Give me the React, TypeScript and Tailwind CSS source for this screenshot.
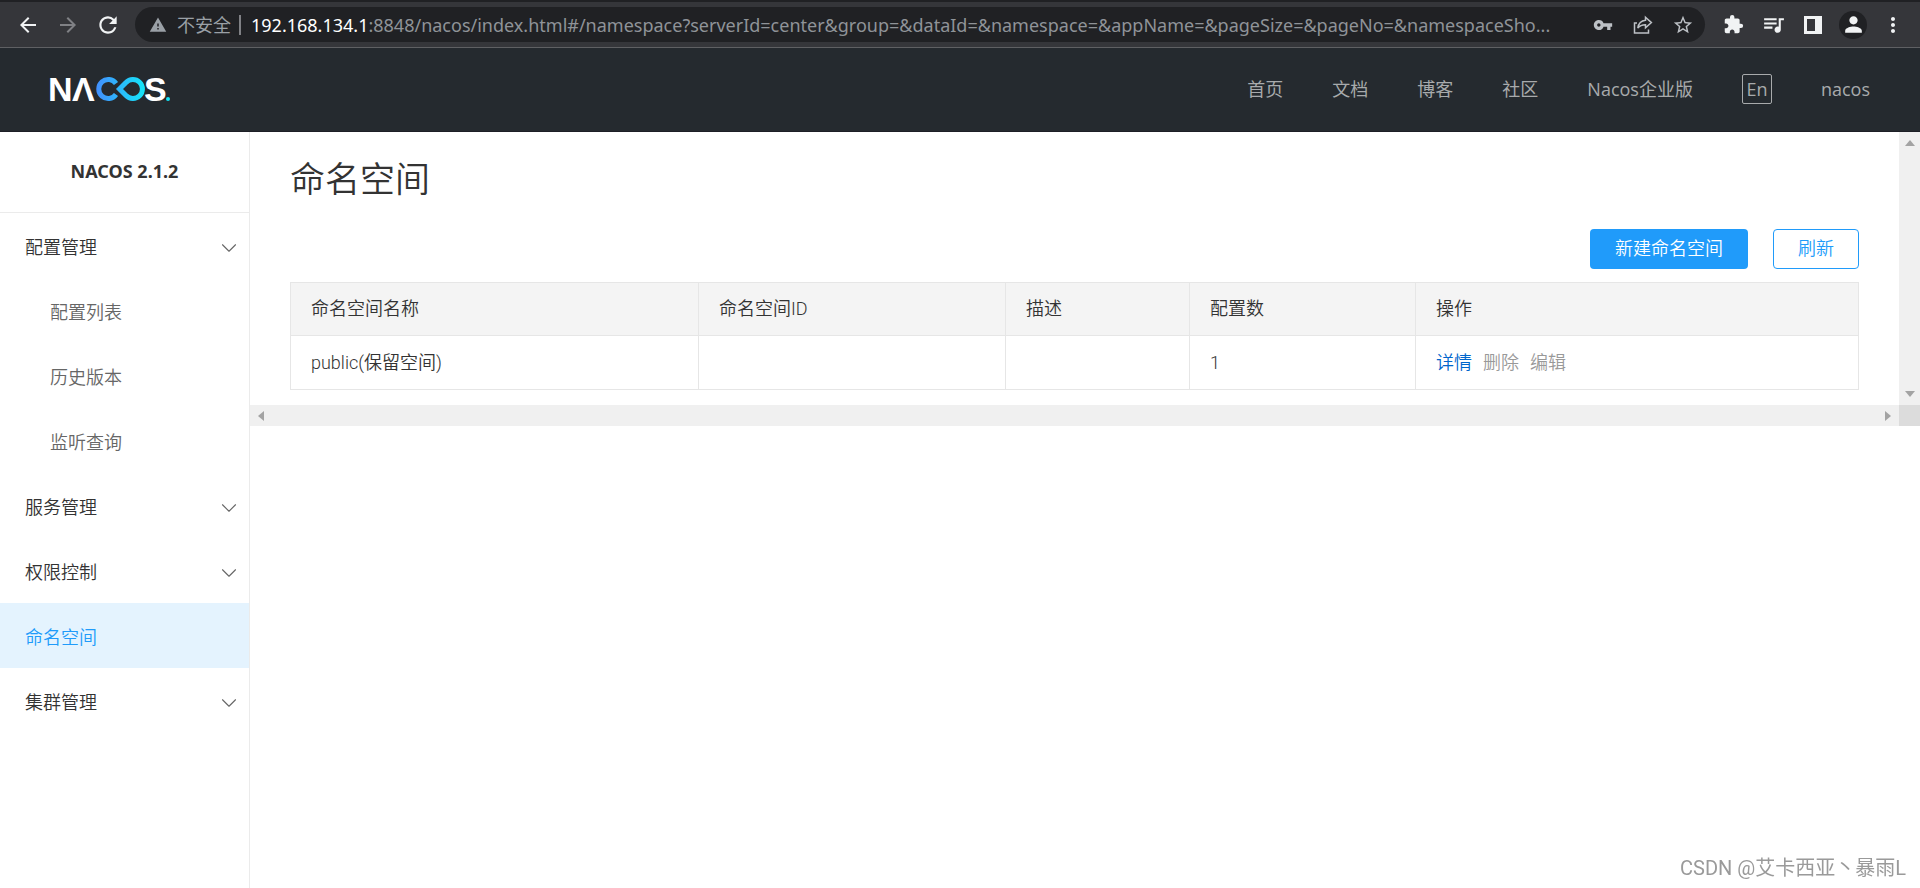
import React, { useState } from 'react';
import { ChevronDown } from 'lucide-react';
import {
  MdArrowBack,
  MdArrowForward,
  MdExtension,
  MdMoreVert,
  MdPerson,
  MdQueueMusic,
  MdRefresh,
  MdStarBorder,
  MdVpnKey,
  MdWarning,
} from 'react-icons/md';

interface MenuItem {
  key: string;
  label: string;
  children?: MenuItem[];
}

interface Namespace {
  id: string;
  name: string;
  description: string;
  configCount: number;
}

const MENU: MenuItem[] = [
  {
    key: 'config',
    label: '配置管理',
    children: [
      { key: 'configList', label: '配置列表' },
      { key: 'history', label: '历史版本' },
      { key: 'listening', label: '监听查询' },
    ],
  },
  { key: 'service', label: '服务管理', children: [{ key: 'serviceList', label: '服务列表' }] },
  { key: 'authority', label: '权限控制', children: [{ key: 'users', label: '用户列表' }] },
  { key: 'namespace', label: '命名空间' },
  { key: 'cluster', label: '集群管理', children: [{ key: 'nodes', label: '节点列表' }] },
];

const NAV_LINKS = ['首页', '文档', '博客', '社区', 'Nacos企业版'];

const NAMESPACES: Namespace[] = [
  { id: '', name: 'public(保留空间)', description: '', configCount: 1 },
];

const ShareIcon = () => (
  <svg width="20" height="20" viewBox="0 0 20 20" fill="none" stroke="currentColor" strokeWidth="1.5" strokeLinejoin="miter">
    <path d="M4 8H1.5v10h14v-3.5" />
    <path d="M12.5 2.2 18.4 7.6l-5.9 5.2V9.7c-3.5 0-5.9 1-7.7 3.4.6-4 3-7.3 7.7-7.8z" />
  </svg>
);

const SidePanelIcon = () => (
  <svg width="20" height="20" viewBox="0 0 20 20" fill="currentColor" fillRule="evenodd">
    <path d="M1 1h18v18H1zM4 4v12h8V4z" />
  </svg>
);

const Logo = () => (
  <svg width="130" height="48" viewBox="0 0 130 48" role="img" aria-label="NACOS.">
    <defs>
      <linearGradient id="loop" gradientUnits="userSpaceOnUse" x1="49" y1="0" x2="99" y2="0">
        <stop offset="0" stopColor="#448dfe" />
        <stop offset="1" stopColor="#14e5f8" />
      </linearGradient>
    </defs>
    <g fill="#fff" fontFamily="Liberation Sans, sans-serif" fontWeight="700" fontSize="34">
      <text x="2" y="36">N</text>
      <text x="26" y="36">Λ</text>
      <text x="98" y="36">S</text>
    </g>
    <g fill="none" stroke="url(#loop)" strokeWidth="5">
      <path d="M70 18.500A9.500 9.500 0 1 0 70 29.500" />
      <path d="M73.500 24 80 17.500A9.500 9.500 0 1 1 80 30.500Z" />
    </g>
    <circle cx="122" cy="34" r="2" fill="#14e5f8" />
  </svg>
);

// Barra do navegador
const BrowserBar = () => (
  <div className="flex h-12 items-center border-t-2 border-b border-t-[#202124] border-b-[#5f6063] bg-[#35363a] pr-[7px] pl-2 font-['Noto_Sans','Noto_Sans_CJK_SC',sans-serif] text-lg text-[#f1f3f4]">
    <button type="button" aria-label="后退" className="flex w-10 justify-center"><MdArrowBack size={24} /></button>
    <button type="button" aria-label="前进" className="flex w-10 justify-center text-[#808185]"><MdArrowForward size={24} /></button>
    <button type="button" aria-label="刷新页面" className="flex w-10 justify-center"><MdRefresh size={26} /></button>

    <div className="ml-[7px] flex h-[35px] min-w-0 flex-1 items-center rounded-full bg-[#202124] pr-0.5 pl-3.5 text-[#9aa0a6]">
      <MdWarning size={18} className="shrink-0" />
      <span className="ml-2.5 shrink-0">不安全</span>
      <span className="mr-2.5 ml-2 h-5 w-0.5 shrink-0 bg-[#808185]" />
      <span className="min-w-0 flex-1 truncate text-[#8f9398]">
        <span className="text-white">192.168.134.1</span>
        :8848/nacos/index.html#/namespace?serverId=center&amp;group=&amp;dataId=&amp;namespace=&amp;appName=&amp;pageSize=&amp;pageNo=&amp;namespaceSho...
      </span>
      <div className="flex shrink-0 text-[#bdc1c6]">
        <button type="button" aria-label="密码" className="flex w-10 items-center justify-center"><MdVpnKey size={20} /></button>
        <button type="button" aria-label="分享" className="flex w-10 items-center justify-center"><ShareIcon /></button>
        <button type="button" aria-label="收藏" className="flex w-10 items-center justify-center"><MdStarBorder size={22} /></button>
      </div>
    </div>

    <div className="ml-2 flex items-center">
      <button type="button" aria-label="扩展程序" className="flex w-10 justify-center"><MdExtension size={21} /></button>
      <button type="button" aria-label="媒体" className="flex w-10 justify-center"><MdQueueMusic size={25} /></button>
      <button type="button" aria-label="侧边栏" className="flex w-10 justify-center"><SidePanelIcon /></button>
      <button type="button" aria-label="用户" className="flex w-10 justify-center">
        <span className="flex size-7 items-center justify-center rounded-full bg-[#202124]"><MdPerson size={25} /></span>
      </button>
      <button type="button" aria-label="更多" className="flex w-10 justify-center"><MdMoreVert size={24} /></button>
    </div>
  </div>
);

// Cabeçalho do Nacos
const Header = () => (
  <header className="flex h-21 items-center justify-between border-b border-[#1d1f26] bg-[#252a2f] pr-[50px] pb-0.5 pl-[46px]">
    <a href="#/" className="block"><Logo /></a>
    <nav className="flex items-center gap-[49px] font-['Open_Sans','Noto_Sans_CJK_SC',sans-serif] text-lg text-[#a8aaac]">
      {NAV_LINKS.map(link => (
        <a key={link} href="#/">{link}</a>
      ))}
      <button type="button" className="flex size-[30px] items-center justify-center rounded-xs border border-[#a8aaac]">En</button>
      <a href="#/">nacos</a>
    </nav>
  </header>
);

const Sidebar = () => {
  const [openKeys, setOpenKeys] = useState<string[]>(['config']);
  const [current, setCurrent] = useState('namespace');

  // Abre ou fecha um grupo do menu
  const toggle = (key: string) => {
    setOpenKeys(prev => (prev.includes(key) ? prev.filter(k => k !== key) : [...prev, key]));
  };

  return (
    <aside className="w-[250px] shrink-0 border-r border-[#ebebeb]">
      <h2 className="flex h-[81px] items-center justify-center border-b border-[#ebebeb] pb-0.5 font-['Noto_Sans',sans-serif] text-lg font-bold text-[#333]">
        NACOS 2.1.2
      </h2>
      <ul>
        {MENU.map(item => (
          <li key={item.key}>
            <button
              type="button"
              onClick={() => (item.children ? toggle(item.key) : setCurrent(item.key))}
              className={`flex h-[65px] w-full items-center justify-between pt-1 pr-[7px] pl-[25px] ${
                current === item.key ? 'bg-[#e4f3fe] text-[#209bfa]' : 'text-[#333]'
              }`}
            >
              {item.label}
              {item.children && <ChevronDown size={26} strokeWidth={1} className="text-[#666]" />}
            </button>
            {item.children && openKeys.includes(item.key) && (
              <ul>
                {item.children.map(child => (
                  <li key={child.key}>
                    <button
                      type="button"
                      onClick={() => setCurrent(child.key)}
                      className={`flex h-[65px] w-full items-center pt-1 pl-[50px] ${
                        current === child.key ? 'bg-[#e4f3fe] text-[#209bfa]' : 'text-[#666]'
                      }`}
                    >
                      {child.label}
                    </button>
                  </li>
                ))}
              </ul>
            )}
          </li>
        ))}
      </ul>
    </aside>
  );
};

const NamespaceTable = ({ rows }: { rows: Namespace[] }) => (
  <table className="mt-[13px] w-full table-fixed border-collapse text-left text-[#333]">
    <thead>
      <tr className="h-[53px] bg-[#f4f4f4]">
        <th className="w-[408px] border border-[#e6e6e6] px-5 font-[350]">命名空间名称</th>
        <th className="w-[307px] border border-[#e6e6e6] px-5 font-[350]">命名空间ID</th>
        <th className="w-[184px] border border-[#e6e6e6] px-5 font-[350]">描述</th>
        <th className="w-[226px] border border-[#e6e6e6] px-5 font-[350]">配置数</th>
        <th className="border border-[#e6e6e6] px-5 font-[350]">操作</th>
      </tr>
    </thead>
    <tbody>
      {rows.map(row => (
        <tr key={row.name} className="h-[54px]">
          <td className="border border-[#e6e6e6] px-5">{row.name}</td>
          <td className="border border-[#e6e6e6] px-5">{row.id}</td>
          <td className="border border-[#e6e6e6] px-5">{row.description}</td>
          <td className="border border-[#e6e6e6] px-5">{row.configCount}</td>
          <td className="border border-[#e6e6e6] px-5">
            <div className="flex gap-[11px] text-[#999]">
              <a href="#/" className="text-[#06c]">详情</a>
              <button type="button">删除</button>
              <button type="button">编辑</button>
            </div>
          </td>
        </tr>
      ))}
    </tbody>
  </table>
);

const App: React.FC = () => (
  <div className="flex min-h-screen flex-col bg-white font-[Roboto,'Noto_Sans_CJK_SC',sans-serif] text-lg">
    <BrowserBar />
    <Header />
    <div className="flex flex-1 font-[350]">
      <Sidebar />
      <div className="flex min-w-0 flex-1 flex-col">
        <div className="flex">
          <main className="min-w-0 flex-1 px-10 pt-[26px] pb-[15px]">
            <h1 className="text-[35px] leading-[45px] text-[#333]">命名空间</h1>
            <div className="mt-[26px] flex justify-end gap-[25px]">
              <button type="button" className="h-10 rounded-sm bg-[#209bfa] px-[25px] text-white">新建命名空间</button>
              <button type="button" className="h-10 rounded-sm border border-[#209bfa] px-6 text-[#209bfa]">刷新</button>
            </div>
            <NamespaceTable rows={NAMESPACES} />
          </main>
          <div className="flex w-[21px] flex-col items-center justify-between bg-[#f0f0f0] py-2 text-[#a3a3a3]">
            <svg width="10" height="6" viewBox="0 0 10 6" fill="currentColor"><path d="M0 6 5 0l5 6z" /></svg>
            <svg width="10" height="6" viewBox="0 0 10 6" fill="currentColor"><path d="M0 0h10L5 6z" /></svg>
          </div>
        </div>
        <div className="flex h-[21px] bg-[#f0f0f0] text-[#a3a3a3]">
          <div className="flex flex-1 items-center justify-between px-2">
            <svg width="6" height="10" viewBox="0 0 6 10" fill="currentColor"><path d="M6 0v10L0 5z" /></svg>
            <svg width="6" height="10" viewBox="0 0 6 10" fill="currentColor"><path d="M0 0l6 5-6 5z" /></svg>
          </div>
          <div className="w-[21px] bg-[#dcdcdc]" />
        </div>
      </div>
    </div>
    <p className="fixed right-3.5 bottom-1.5 text-xl text-[#9a9a9a]">
      CSDN @艾卡西亚丶暴雨L
    </p>
  </div>
);

export default App;
